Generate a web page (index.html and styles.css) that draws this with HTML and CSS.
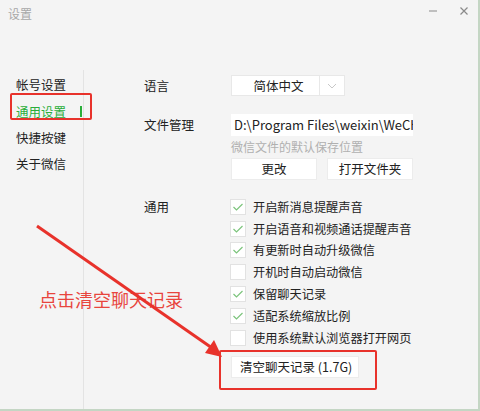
FILE: index.html
```html
<!DOCTYPE html>
<html lang="zh-CN">
<head>
  <meta charset="UTF-8">
  <title>设置</title>
  <link rel="stylesheet" href="styles.css">
</head>
<body>
  <div class="window">
    <div class="titlebar">
      <span class="title">设置</span>
      <div class="controls">
        <svg class="ctl" width="10" height="10" viewBox="0 0 10 10"><line x1="1" y1="5" x2="9" y2="5" stroke="#8a8a8a" stroke-width="1"/></svg>
        <svg class="ctl" width="10" height="10" viewBox="0 0 10 10"><path d="M1.5 1.5 L8.5 8.5 M8.5 1.5 L1.5 8.5" stroke="#8a8a8a" stroke-width="1.2"/></svg>
      </div>
    </div>

    <div class="main">
      <div class="sidebar">
        <div class="nav-item">帐号设置</div>
        <div class="nav-item active">通用设置<span class="indicator"></span></div>
        <div class="nav-item">快捷按键</div>
        <div class="nav-item">关于微信</div>
      </div>

      <div class="content">
        <div class="row row-lang">
          <div class="label">语言</div>
          <div class="field">
            <div class="select">
              <span class="select-text">简体中文</span>
              <span class="select-arrow">
                <svg width="10" height="6" viewBox="0 0 10 6"><polyline points="1,1 5,5 9,1" fill="none" stroke="#c8c8c8" stroke-width="1"/></svg>
              </span>
            </div>
          </div>
        </div>

        <div class="row row-file">
          <div class="label">文件管理</div>
          <div class="field">
            <div class="path">D:\Program Files\weixin\WeChat Files</div>
            <div class="hint">微信文件的默认保存位置</div>
            <div class="btns">
              <div class="btn">更改</div>
              <div class="btn">打开文件夹</div>
            </div>
          </div>
        </div>

        <div class="row row-general">
          <div class="label">通用</div>
          <div class="field">
            <div class="check"><span class="box on"><svg width="12" height="10" viewBox="0 0 12 10"><polyline points="1.5,5 4.5,8 10.5,2" fill="none" stroke="#7cc47c" stroke-width="1.2"/></svg></span>开启新消息提醒声音</div>
            <div class="check"><span class="box on"><svg width="12" height="10" viewBox="0 0 12 10"><polyline points="1.5,5 4.5,8 10.5,2" fill="none" stroke="#7cc47c" stroke-width="1.2"/></svg></span>开启语音和视频通话提醒声音</div>
            <div class="check"><span class="box on"><svg width="12" height="10" viewBox="0 0 12 10"><polyline points="1.5,5 4.5,8 10.5,2" fill="none" stroke="#7cc47c" stroke-width="1.2"/></svg></span>有更新时自动升级微信</div>
            <div class="check"><span class="box"></span>开机时自动启动微信</div>
            <div class="check"><span class="box on"><svg width="12" height="10" viewBox="0 0 12 10"><polyline points="1.5,5 4.5,8 10.5,2" fill="none" stroke="#7cc47c" stroke-width="1.2"/></svg></span>保留聊天记录</div>
            <div class="check"><span class="box on"><svg width="12" height="10" viewBox="0 0 12 10"><polyline points="1.5,5 4.5,8 10.5,2" fill="none" stroke="#7cc47c" stroke-width="1.2"/></svg></span>适配系统缩放比例</div>
            <div class="check"><span class="box"></span>使用系统默认浏览器打开网页</div>
            <div class="btn btn-clear">清空聊天记录 (1.7G)</div>
          </div>
        </div>
      </div>
    </div>

    <!-- annotations -->
    <div class="mark mark-nav"></div>
    <div class="mark mark-clear"></div>
    <div class="note">点击清空聊天记录</div>
    <svg class="arrow" width="478" height="409" viewBox="0 0 478 409">
      <line x1="37" y1="226" x2="212" y2="348" stroke="#e8322b" stroke-width="3"/>
      <polygon points="222,357 205,353 214,340" fill="#e8322b"/>
    </svg>
  </div>
</body>
</html>
```

FILE: styles.css
```css
* {
  box-sizing: border-box;
}

body {
  margin: 0;
  background: #c4d6c4;
  font-family: "Noto Sans CJK SC", "Noto Sans", sans-serif;
  color: #222;
}

.window {
  position: relative;
  width: 478px;
  height: 409px;
  background: #f4f4f4;
  display: flex;
  flex-direction: column;
  overflow: hidden;
}

.titlebar {
  height: 70px;
  display: flex;
  justify-content: space-between;
  align-items: flex-start;
  padding: 5px 9px 0 8px;
}

.title {
  font-size: 12px;
  line-height: 18px;
  color: #a8a8a8;
}

.controls {
  display: flex;
  gap: 21px;
  padding-top: 1px;
}

.main {
  flex: 1;
  display: flex;
}

.sidebar {
  width: 84px;
  border-right: 1px solid #e3e3e3;
  padding-top: 2px;
}

.nav-item {
  height: 26.4px;
  line-height: 26px;
  padding-left: 16px;
  font-size: 12.5px;
  color: #222;
  display: flex;
  justify-content: space-between;
  align-items: center;
}

.nav-item.active {
  color: #2aae3a;
}

.indicator {
  width: 2px;
  height: 11px;
  background: #2aae3a;
  margin-right: 1px;
}

.content {
  flex: 1;
  padding: 5px 0 0 60px;
}

.row {
  display: flex;
}

.label {
  width: 87px;
  font-size: 12.5px;
  line-height: 21px;
}

.row-file {
  margin-top: 18px;
}

.row-file .label {
  line-height: 22px;
}

.row-general {
  margin-top: 19px;
}

.row-general .label {
  line-height: 16px;
}

.select {
  width: 114px;
  height: 21px;
  background: #fff;
  border: 1px solid #e8e8e8;
  display: flex;
}

.select-text {
  width: 88px;
  text-align: center;
  font-size: 12.5px;
  line-height: 19px;
  padding-left: 6px;
  border-right: 1px solid #e8e8e8;
}

.select-arrow {
  flex: 1;
  display: flex;
  align-items: center;
  justify-content: center;
}

.path {
  width: 182px;
  height: 22px;
  background: #fff;
  font-size: 13px;
  line-height: 22px;
  padding-left: 3px;
  white-space: nowrap;
  overflow: hidden;
  color: #222;
}

.hint {
  margin-top: 3px;
  font-size: 12px;
  line-height: 16px;
  color: #b0b0b0;
}

.btns {
  display: flex;
  gap: 10px;
  margin-top: 3px;
}

.btn {
  width: 86px;
  height: 22px;
  background: #fff;
  border: 1px solid #ececec;
  text-align: center;
  font-size: 12.5px;
  line-height: 20px;
  color: #222;
}

.check {
  display: flex;
  align-items: center;
  height: 21.8px;
  font-size: 12.2px;
  line-height: 16px;
}

.check:first-child {
  margin-top: -3px;
}

.box {
  width: 16px;
  height: 16px;
  margin-left: -1px;
  margin-right: 7px;
  background: #fff;
  border: 1px solid #e2e2e2;
  display: flex;
  align-items: center;
  justify-content: center;
}

.btn-clear {
  width: 128px;
  margin-top: 7px;
  text-align: left;
  padding-left: 8px;
  font-size: 12.5px;
}

.mark {
  position: absolute;
  border: 2px solid #e8322b;
  border-radius: 2px;
}

.mark-nav {
  left: 10px;
  top: 93px;
  width: 82px;
  height: 27px;
}

.mark-clear {
  left: 219px;
  top: 350px;
  width: 158px;
  height: 40px;
}

.note {
  position: absolute;
  left: 39px;
  top: 287px;
  font-size: 18px;
  line-height: 24px;
  color: #e8453d;
}

.arrow {
  position: absolute;
  left: 0;
  top: 0;
  pointer-events: none;
}
```
